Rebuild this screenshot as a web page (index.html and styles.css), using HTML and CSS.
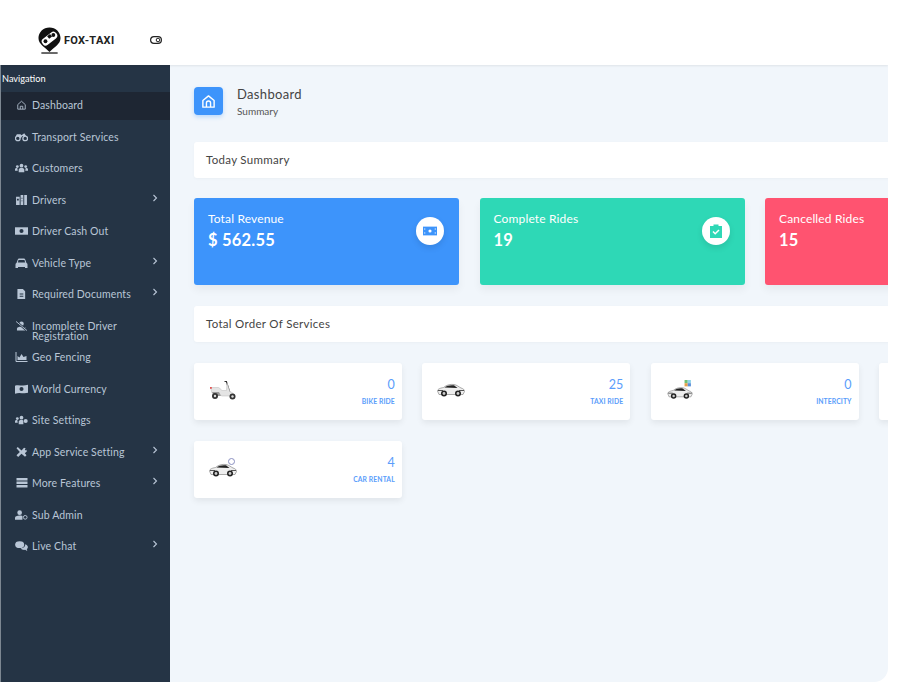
FILE: index.html
```html
<!DOCTYPE html>
<html lang="en">
<head>
<meta charset="utf-8">
<title>Fox-Taxi Dashboard</title>
<link rel="stylesheet" href="styles.css">
</head>
<body>
<div class="app">
  <header class="topbar">
    <div class="brand">
      <svg class="logo" viewBox="0 0 24 28"><path d="M12 .5C5.500.5.500 5.500.500 11.500c0 6.500 6.500 9.500 11.500 14.500 5-5 11.500-8 11.500-14.500C23.500 5.500 18.500.5 12 .5z" fill="#111"/><rect x="3" y="8" width="18" height="8" rx="3.600" fill="#fff" transform="rotate(-38 12 12)"/><path d="M9.500 9.500l3-2.300 2.200 2.700-3 2.300z" fill="#111"/><circle cx="7.800" cy="14.800" r="2" fill="#111"/><circle cx="16" cy="8.300" r="2" fill="#111"/><rect x="3.500" y="26.400" width="17" height="1.300" fill="#111"/></svg>
      <span class="brand-name">FOX-TAXI</span>
    </div>
    <svg class="toggle" viewBox="0 0 12 8"><rect x=".6" y=".6" width="10.800" height="6.800" rx="3.400" fill="none" stroke="#222" stroke-width="1.200"/><circle cx="8" cy="4" r="1.800" fill="none" stroke="#222" stroke-width="1"/></svg>
  </header>
  <div class="body">
    <nav class="sidebar">
      <div class="nav-title">Navigation</div>
      <a class="nav-item active"><svg class="ni" viewBox="0 0 12 12"><path d="M1.500 5.500 6 1.500l4.500 4V11h-9zM4.500 11V7.500h3V11" fill="none" stroke="currentColor"/></svg><span class="nav-label">Dashboard</span></a>
      <a class="nav-item"><svg class="ni" viewBox="0 0 14 10"><circle cx="3" cy="6.500" r="2.500" fill="none" stroke="currentColor" stroke-width="1.400"/><circle cx="11" cy="6.500" r="2.500" fill="none" stroke="currentColor" stroke-width="1.400"/><path d="M2 2h4l1 1 3-2 2 3H8L6 6.500 4 4H1z" fill="currentColor"/></svg><span class="nav-label">Transport Services</span></a>
      <a class="nav-item"><svg class="ni" viewBox="0 0 14 10"><circle cx="7" cy="2.500" r="2" fill="currentColor"/><circle cx="2.500" cy="3.500" r="1.500" fill="currentColor"/><circle cx="11.500" cy="3.500" r="1.500" fill="currentColor"/><path d="M4 9.500V7c0-1.500 1-2 3-2s3 .5 3 2v2.500zM0 8V6.500c0-1 .8-1.500 2.500-1.500L3 8zM14 8V6.500c0-1-.8-1.500-2.500-1.500L11 8z" fill="currentColor"/></svg><span class="nav-label">Customers</span></a>
      <a class="nav-item"><svg class="ni" viewBox="0 0 12 11"><path d="M0 2h4v9H0zM5 0h3v11H5zM9 0h3v11H9z" fill="currentColor"/><path d="M1 4h2v2H1zM6 3h1v1H6zM6 6h1v1H6z" fill="#253445"/></svg><span class="nav-label">Drivers</span><svg class="chev" viewBox="0 0 6 8"><path d="m1.500 1 3 3-3 3" fill="none" stroke="currentColor" stroke-width="1.100"/></svg></a>
      <a class="nav-item"><svg class="ni" viewBox="0 0 14 10"><path d="M0 1h14v8H0z" fill="currentColor"/><circle cx="7" cy="5" r="2.200" fill="#253445"/></svg><span class="nav-label">Driver Cash Out</span></a>
      <a class="nav-item"><svg class="ni" viewBox="0 0 12 10"><path d="M1 5l1.300-3.500C2.500 1 3 .5 4 .5h4c1 0 1.500.5 1.700 1L11 5c.6.300 1 .8 1 1.500V10H9.500V9h-7v1H0V6.500C0 5.800.4 5.300 1 5z" fill="currentColor"/><path d="M3 2h6l.7 2.500H2.300z" fill="#253445"/></svg><span class="nav-label">Vehicle Type</span><svg class="chev" viewBox="0 0 6 8"><path d="m1.500 1 3 3-3 3" fill="none" stroke="currentColor" stroke-width="1.100"/></svg></a>
      <a class="nav-item"><svg class="ni" viewBox="0 0 12 11"><path d="M1.500 0h6L10 2.500V11H1.500z" fill="currentColor"/><path d="M4 5h4v1H4zM4 7.500h4v1H4z" fill="#253445"/></svg><span class="nav-label">Required Documents</span><svg class="chev" viewBox="0 0 6 8"><path d="m1.500 1 3 3-3 3" fill="none" stroke="currentColor" stroke-width="1.100"/></svg></a>
      <a class="nav-item"><svg class="ni" viewBox="0 0 14 11"><circle cx="7" cy="3" r="2.500" fill="currentColor"/><path d="M2 10.500V8.500c0-1.500 2-2.500 5-2.500s5 1 5 2.500v2z" fill="currentColor"/><path d="M1 .5l12 10" stroke="#253445" stroke-width="2.400"/><path d="M1 .5l12 10" stroke="currentColor" stroke-width="1"/></svg><span class="nav-label">Incomplete Driver Registration</span></a>
      <a class="nav-item"><svg class="ni" viewBox="0 0 12 10"><path d="M.5 0v9.500H12" fill="none" stroke="currentColor"/><path d="M2 8V4l2 1.500L6 2l2 3 3-1v4z" fill="currentColor"/></svg><span class="nav-label">Geo Fencing</span></a>
      <a class="nav-item"><svg class="ni" viewBox="0 0 14 10"><path d="M0 1.500c4-1.500 8 1 14-1v8.500c-5 1.500-9-1-14 1z" fill="currentColor"/><circle cx="7" cy="5" r="2.200" fill="#253445"/></svg><span class="nav-label">World Currency</span></a>
      <a class="nav-item"><svg class="ni" viewBox="0 0 14 10"><circle cx="7" cy="2.500" r="2" fill="currentColor"/><circle cx="2.500" cy="3.500" r="1.500" fill="currentColor"/><circle cx="11.500" cy="6" r="2.200" fill="currentColor"/><path d="M4 9.500V7c0-1.500 1-2 3-2s2 .5 2 2v2.500zM0 8V6.500c0-1 .8-1.500 2.500-1.500L3 8z" fill="currentColor"/></svg><span class="nav-label">Site Settings</span></a>
      <a class="nav-item"><svg class="ni" viewBox="0 0 12 12"><path d="M1.500 0 6 4.200 9 1l2 .5-1 1.500 1.500 1.500L12 3l.5 2-2.500 2.500L12 10l-1.800 1.800L6 8l-4 4L0 10l4-4L0 1.500z" fill="currentColor"/></svg><span class="nav-label">App Service Setting</span><svg class="chev" viewBox="0 0 6 8"><path d="m1.500 1 3 3-3 3" fill="none" stroke="currentColor" stroke-width="1.100"/></svg></a>
      <a class="nav-item"><svg class="ni" viewBox="0 0 12 10"><path d="M1 0h11v2.500H1zM1 3.500h11V6H1zM1 7h11v2.500H1z" fill="currentColor"/></svg><span class="nav-label">More Features</span><svg class="chev" viewBox="0 0 6 8"><path d="m1.500 1 3 3-3 3" fill="none" stroke="currentColor" stroke-width="1.100"/></svg></a>
      <a class="nav-item"><svg class="ni" viewBox="0 0 14 10"><circle cx="5" cy="2.500" r="2.500" fill="currentColor"/><path d="M0 10V8c0-1.500 2-2.500 5-2.500 1 0 2 .1 3 .5v4z" fill="currentColor"/><circle cx="11" cy="7.500" r="2" fill="none" stroke="currentColor"/></svg><span class="nav-label">Sub Admin</span></a>
      <a class="nav-item"><svg class="ni" viewBox="0 0 14 11"><ellipse cx="5" cy="4" rx="5" ry="3.700" fill="currentColor"/><path d="M11 3.500c2 .6 3 1.800 3 3.200 0 1-.5 1.800-1.200 2.300l.7 2-2.500-1.300c-2 .3-4-.3-5-1.800 3 0 5.500-1.800 5-4.400z" fill="currentColor"/></svg><span class="nav-label">Live Chat</span><svg class="chev" viewBox="0 0 6 8"><path d="m1.500 1 3 3-3 3" fill="none" stroke="currentColor" stroke-width="1.100"/></svg></a>
    </nav>
    <main class="content">
      <div class="page-head">
        <div class="page-icon"><svg viewBox="0 0 16 16"><path d="M2 7 8 2l6 5v7H2zM5.800 14V9.500c0-2.800 4.400-2.800 4.400 0V14" fill="none" stroke="#fff" stroke-width="1.500" stroke-linejoin="round"/></svg></div>
        <div class="page-text">
          <div class="page-title">Dashboard</div>
          <div class="page-sub">Summary</div>
        </div>
      </div>
      <div class="bar">Today Summary</div>
      <div class="stats">
        <div class="stat blue">
          <div><div class="stat-label">Total Revenue</div><div class="stat-value">$ 562.55</div></div>
          <div class="stat-icon"><svg viewBox="0 0 16 10"><path d="M0 0h16v10H0z" fill="#3d94fb"/><circle cx="8" cy="5" r="1.800" fill="#fff"/><path d="M2 2v1.500M2 6.500V8M14 2v1.500M14 6.500V8" stroke="#fff" stroke-width="1"/></svg></div>
        </div>
        <div class="stat green">
          <div><div class="stat-label">Complete Rides</div><div class="stat-value">19</div></div>
          <div class="stat-icon"><svg viewBox="0 0 12 14"><path d="M0 2h3.500V.5h5V2H12v12H0z" fill="#2ed8b6"/><path d="m3 7.500 2.200 2.200L9 6" fill="none" stroke="#fff" stroke-width="1.500"/></svg></div>
        </div>
        <div class="stat red">
          <div><div class="stat-label">Cancelled Rides</div><div class="stat-value">15</div></div>
        </div>
      </div>
      <div class="bar">Total Order Of Services</div>
      <div class="services">
        <div class="service">
          <svg class="vehicle" viewBox="0 0 28 20"><path d="M15.500 1.500h2.500M17.500 2l3.500 11" stroke="#333" stroke-width="1.200" fill="none"/><path d="M1.500 7.500h8c1.500 0 2 2.500 3.500 3h4.500L18 3l3 9c2 0 4 1.500 5 4H12.500c-1-2-3-3-5-3H3z" fill="#e4e4e4" stroke="#bbb" stroke-width=".5"/><path d="M3 12h7l2 4H5z" fill="#999"/><circle cx="6" cy="16" r="3" fill="#333"/><circle cx="6" cy="16" r="1.200" fill="#ddd"/><circle cx="23.500" cy="16.500" r="3" fill="#333"/><circle cx="23.500" cy="16.500" r="1.200" fill="#ddd"/><rect x="1" y="7" width="1.800" height="1.800" fill="#e25555"/></svg>
          <div class="service-info"><div class="service-num">0</div><div class="service-name">BIKE RIDE</div></div>
        </div>
        <div class="service">
          <svg class="vehicle" viewBox="0 0 28 14"><path d="M.5 8c0-2 3-3 6-3.500C9.500 2 13 1 17 1.500c3 .5 5 2.500 7 3.500 2 .5 3.500 1.500 3.500 3.500L26 11.500H2z" fill="#eee" stroke="#888" stroke-width=".7"/><path d="M7.500 4.500c2.500-2 6-2.700 9.500-2.200l3.500 2.700z" fill="#222"/><path d="M1 7.500h5M22 7.500h5" stroke="#555" stroke-width="1"/><circle cx="7" cy="10.500" r="3" fill="#222"/><circle cx="7" cy="10.500" r="1.400" fill="#ccc"/><circle cx="21" cy="10.500" r="3" fill="#222"/><circle cx="21" cy="10.500" r="1.400" fill="#ccc"/></svg>
          <div class="service-info"><div class="service-num">25</div><div class="service-name">TAXI RIDE</div></div>
        </div>
        <div class="service">
          <svg class="vehicle" viewBox="0 0 28 22"><path d="M.5 15c0-2 3-3 6-3.500C9.500 9 13 8 17 8.500c3 .5 5 2.500 7 3.500 2 .5 3.500 1.500 3.500 3.500L26 18.500H2z" fill="#eee" stroke="#888" stroke-width=".7"/><path d="M7.500 11.500c2.500-2 6-2.700 9.500-2.200l3.500 2.700z" fill="#222"/><path d="M1 14.500h5M22 14.500h5" stroke="#555" stroke-width="1"/><circle cx="7" cy="17.500" r="3" fill="#222"/><circle cx="7" cy="17.500" r="1.400" fill="#ccc"/><circle cx="21" cy="17.500" r="3" fill="#222"/><circle cx="21" cy="17.500" r="1.400" fill="#ccc"/><rect x="19" y="0" width="3.500" height="3.500" fill="#6fbf73"/><rect x="22.500" y="0" width="3.500" height="3.500" fill="#8fd3e8"/><rect x="19" y="3.500" width="3.500" height="3.500" fill="#e8a04a"/><rect x="22.500" y="3.500" width="3.500" height="3.500" fill="#5a8fd8"/></svg>
          <div class="service-info"><div class="service-num">0</div><div class="service-name">INTERCITY</div></div>
        </div>
        <div class="service"></div>
        <div class="service">
          <svg class="vehicle" viewBox="0 0 28 20"><path d="M.5 13c0-2 3-3 6-3.500C9.500 7 13 6 17 6.500c3 .5 5 2.500 7 3.500 2 .5 3.500 1.500 3.500 3.500L26 16.500H2z" fill="#eee" stroke="#888" stroke-width=".7"/><path d="M7.500 9.500c2.500-2 6-2.700 9.500-2.200l3.500 2.700z" fill="#222"/><path d="M1 12.500h5M22 12.500h5" stroke="#555" stroke-width="1"/><circle cx="7" cy="15.500" r="3" fill="#222"/><circle cx="7" cy="15.500" r="1.400" fill="#ccc"/><circle cx="21" cy="15.500" r="3" fill="#222"/><circle cx="21" cy="15.500" r="1.400" fill="#ccc"/><circle cx="22.500" cy="3.500" r="3" fill="#fff" stroke="#8a8fc0" stroke-width="1"/></svg>
          <div class="service-info"><div class="service-num">4</div><div class="service-name">CAR RENTAL</div></div>
        </div>
      </div>
    </main>
  </div>
</div>
</body>
</html>
```

FILE: styles.css
```css
html, body { margin: 0; padding: 0; background: #fff; }
body { font-family: "Lato", "Noto Sans", sans-serif; width: 905px; height: 698px; overflow: hidden; }
.app { width: 888px; height: 682px; overflow: hidden; border-bottom-right-radius: 14px; display: flex; flex-direction: column; background: #f1f6fb; }
.topbar { height: 65px; flex: none; background: #fff; display: flex; align-items: center; padding-top: 15px; box-sizing: border-box; box-shadow: 0 1px 2px rgba(0,0,0,.08); position: relative; z-index: 1; }
.brand { display: flex; align-items: center; margin-left: 38px; width: 112px; }
.logo { width: 23px; height: 27px; }
.brand-name { font-family: "Roboto", sans-serif; font-weight: 700; font-size: 11px; color: #222; margin-left: 3px; letter-spacing: .3px; }
.toggle { width: 12px; height: 8px; }
.body { flex: 1; display: flex; min-height: 0; }
.sidebar { width: 170px; flex: none; box-sizing: border-box; border-left: 1px solid #7d8791; background: #253445; color: #b9c6d6; display: flex; flex-direction: column; }
.nav-title { font-size: 9.200px; color: #fff; height: 27px; padding: 8px 0 0 1px; box-sizing: border-box; line-height: 11px; }
.nav-item { height: 28px; margin-bottom: 3.500px; padding: 8px 0 0 14px; box-sizing: border-box; display: flex; align-items: flex-start; font-size: 10.500px; line-height: 10px; position: relative; }
.nav-item.active { background: #1e2633; }
.ni { width: 13px; height: 10px; flex: none; margin-right: 4px; }
.nav-label { width: 112px; letter-spacing: .12px; }
.chev { width: 6px; height: 8px; position: absolute; right: 12px; top: 7px; }
.content { flex: 1; min-width: 0; padding: 22px 0 0 24px; overflow: hidden; }
.page-head { display: flex; align-items: flex-start; height: 55px; }
.page-icon { width: 29px; height: 28px; border-radius: 4px; background: #3d94fb; display: flex; align-items: center; justify-content: center; box-shadow: 0 2px 4px rgba(61,148,251,.3); }
.page-icon svg { width: 15px; height: 15px; }
.page-text { margin-left: 14px; }
.page-title { font-size: 13px; color: #444; line-height: 15px; letter-spacing: .33px; }
.page-sub { font-size: 10px; color: #555; line-height: 12px; margin-top: 3px; }
.bar { width: 800px; height: 36px; background: #fff; border-radius: 3px; font-size: 11.500px; color: #444; display: flex; align-items: center; padding: 0 0 2px 12px; box-sizing: border-box; letter-spacing: .3px; box-shadow: 0 1px 3px rgba(0,0,0,.03); }
.stats { display: flex; gap: 20.500px; margin: 20px 0 21px; width: 900px; }
.stat { width: 265px; height: 87px; flex: none; border-radius: 3px; color: #fff; padding: 14px 14px 0; box-sizing: border-box; display: flex; justify-content: space-between; box-shadow: 0 5px 8px rgba(0,0,0,.05); }
.blue { background: #3d94fb; }
.green { background: #2ed8b6; }
.red { background: #ff5370; }
.stat-label { font-size: 12px; line-height: 14px; letter-spacing: .15px; }
.stat-value { font-size: 16.500px; font-weight: 700; line-height: 20px; margin-top: 4px; letter-spacing: .2px; }
.stat-icon { width: 28px; height: 28px; border-radius: 50%; background: #fff; margin: 5px 1px 0 0; display: flex; align-items: center; justify-content: center; box-shadow: 0 3px 6px rgba(0,0,0,.1); }
.stat-icon svg { width: 14px; height: 14px; }
.services { display: grid; grid-template-columns: repeat(4, 207.800px); gap: 21px 20.600px; margin-top: 21px; width: 900px; }
.service { height: 57px; background: #fff; border-radius: 3px; display: flex; justify-content: space-between; padding: 0 7px 0 15px; box-sizing: border-box; box-shadow: 0 3px 6px rgba(0,0,0,.07); }
.vehicle { width: 28px; height: 20px; margin-top: 17px; }
.service-info { text-align: right; color: #5a9dfb; }
.service-num { font-size: 12.500px; line-height: 14px; margin-top: 15px; }
.service-name { font-size: 6.800px; font-weight: 700; line-height: 9px; margin-top: 5px; letter-spacing: .1px; }
```
